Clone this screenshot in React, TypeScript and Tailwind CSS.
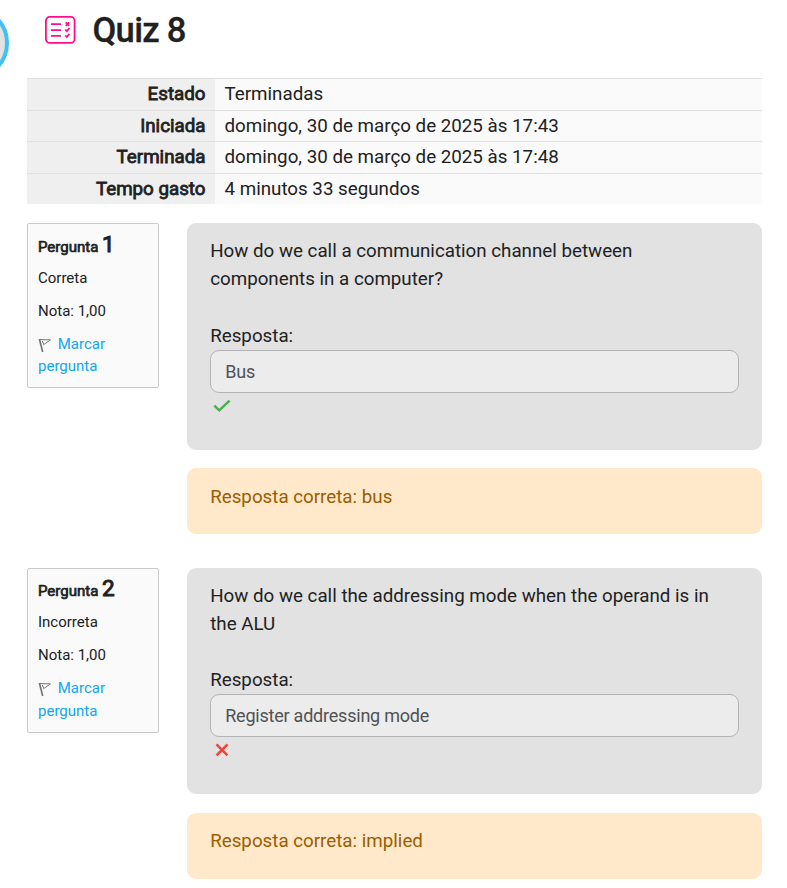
import React from "react";

const details = [
  { label: "Estado", value: "Terminadas" },
  { label: "Iniciada", value: "domingo, 30 de março de 2025 às 17:43" },
  { label: "Terminada", value: "domingo, 30 de março de 2025 às 17:48" },
  { label: "Tempo gasto", value: "4 minutos 33 segundos" },
];

const questions = [
  {
    number: 1,
    state: "Correta",
    correct: true,
    text: ["How do we call a communication channel between", "components in a computer?"],
    answer: "Bus",
    solution: "bus",
  },
  {
    number: 2,
    state: "Incorreta",
    correct: false,
    text: ["How do we call the addressing mode when the operand is in", "the ALU"],
    answer: "Register addressing mode",
    solution: "implied",
  },
];

function QuizIcon() {
  return (
    <svg className="h-[28px] w-[31px] shrink-0" viewBox="0 0 31 28" fill="none" stroke="#ff0d8c" strokeWidth="1.8">
      <rect x="0.9" y="0.9" width="28.7" height="26" rx="3.8" />
      <path d="M6 8.2h10M6 14.2h10M6 19.8h10" />
      <path d="M20.7 6.4l3.4 3.4M24.1 6.4l-3.4 3.4M20.3 13.6l1.5 1.6 2.7-3.2M20.3 19.4l1.5 1.6 2.7-3.2" />
    </svg>
  );
}

function Flag() {
  return (
    <svg className="inline-block h-[15px] w-[13px] align-[-4px]" viewBox="0 0 13 15" fill="none" stroke="#777" strokeWidth="1">
      <path d="M1.4 1l3.3 13" strokeWidth="1.7" />
      <path d="M1 1.5l11.4.4L5.2 7M4.3 3l1.3 3.2" />
    </svg>
  );
}

function Mark({ correct }: { correct: boolean }) {
  return correct ? (
    <svg className="ml-[3px] mt-[6px] h-[14px] w-[18px]" viewBox="0 0 18 14" fill="none" stroke="#4caf50" strokeWidth="2.5">
      <path d="M1.3 6.6L6.3 11.3 16.6 1.6" />
    </svg>
  ) : (
    <svg className="ml-[5px] mt-[6px] h-[14px] w-[14px]" viewBox="0 0 14 14" fill="none" stroke="#f44336" strokeWidth="2.6">
      <path d="M1.5 1.4l11 11M12.5 1.4l-11 11" />
    </svg>
  );
}

export default function App() {
  return (
    <div className="relative h-[888px] w-[787px] overflow-hidden bg-white pl-[27px] pr-[25px] font-['Roboto',sans-serif] text-[18.75px] leading-[28px] text-[#212121]">
      <div className="absolute -left-[65px] top-[6px] h-[74px] w-[74px] rounded-full border-4 border-[#42c0f1] bg-[#e2e2e2]" />
      <header className="flex h-[78px] items-start pl-[18px] pt-[16px]">
        <QuizIcon />
        <h1 className="ml-[16.5px] mt-[-5px] text-[34.6px] font-medium leading-[39px] tracking-[-0.7px] [-webkit-text-stroke:0.3px_#212121]">Quiz 8</h1>
      </header>

      <div className="h-[126px] overflow-hidden">
        <table className="w-full table-fixed border-collapse">
          <tbody>
            {details.map((d) => (
              <tr key={d.label} className="h-[31.5px] border-t border-[#e0e0e0] leading-[30px]">
                <th className="w-[188px] bg-[#efefef] p-0 pr-[9.5px] text-right font-normal [-webkit-text-stroke:0.8px_#212121]">{d.label}</th>
                <td className="bg-[#fafafa] p-0 pl-[9.5px]">{d.value}</td>
              </tr>
            ))}
          </tbody>
        </table>
      </div>

      <main className="mt-[18.9px]">
        {questions.map((q) => (
          <section key={q.number} className="mb-[33.6px] flex items-start justify-between">
            <aside className="h-[165px] w-[132px] rounded-[2px] border border-[#cacaca] bg-[#fafafa] px-[10px] pt-[5.7px] text-[15px] leading-[22.5px]">
              <h3 className="h-[28px] whitespace-nowrap font-normal leading-[28px] [-webkit-text-stroke:0.7px_#212121]">
                Pergunta <span className="text-[22.5px] [-webkit-text-stroke:1px_#212121]">{q.number}</span>
              </h3>
              <div className="mt-[9px]">{q.state}</div>
              <div className="mt-[10.6px]">Nota: 1,00</div>
              <a className="mt-[10.6px] block leading-[22.6px] text-[#0fa7ee]">
                <Flag /> <span className="ml-[3px]">Marcar</span>
                <br />
                pergunta
              </a>
            </aside>
            <div className="w-[575px]">
              <div className="h-[226.8px] rounded-[9px] bg-[#e2e2e2] px-[23px] pt-[14.5px]">
                {q.text.map((t) => (
                  <p key={t} className="whitespace-nowrap pl-[0.2px]">{t}</p>
                ))}
                <div className="mt-[28.4px] pl-[0.2px]">Resposta:</div>
                <div className="mt-[-0.1px] flex h-[43px] items-center rounded-[9px] border border-[#b4b4b4] bg-[#ececec] px-[14.2px] pt-px text-[18px] tracking-[-0.22px] text-[#505254]">
                  {q.answer}
                </div>
                <Mark correct={q.correct} />
              </div>
              <div className="mt-[18.4px] h-[65.9px] rounded-[9px] bg-[#ffe9ca] px-[23.2px] pt-[14.6px] text-[#9c5d00]">
                Resposta correta: {q.solution}
              </div>
            </div>
          </section>
        ))}
      </main>
    </div>
  );
}
